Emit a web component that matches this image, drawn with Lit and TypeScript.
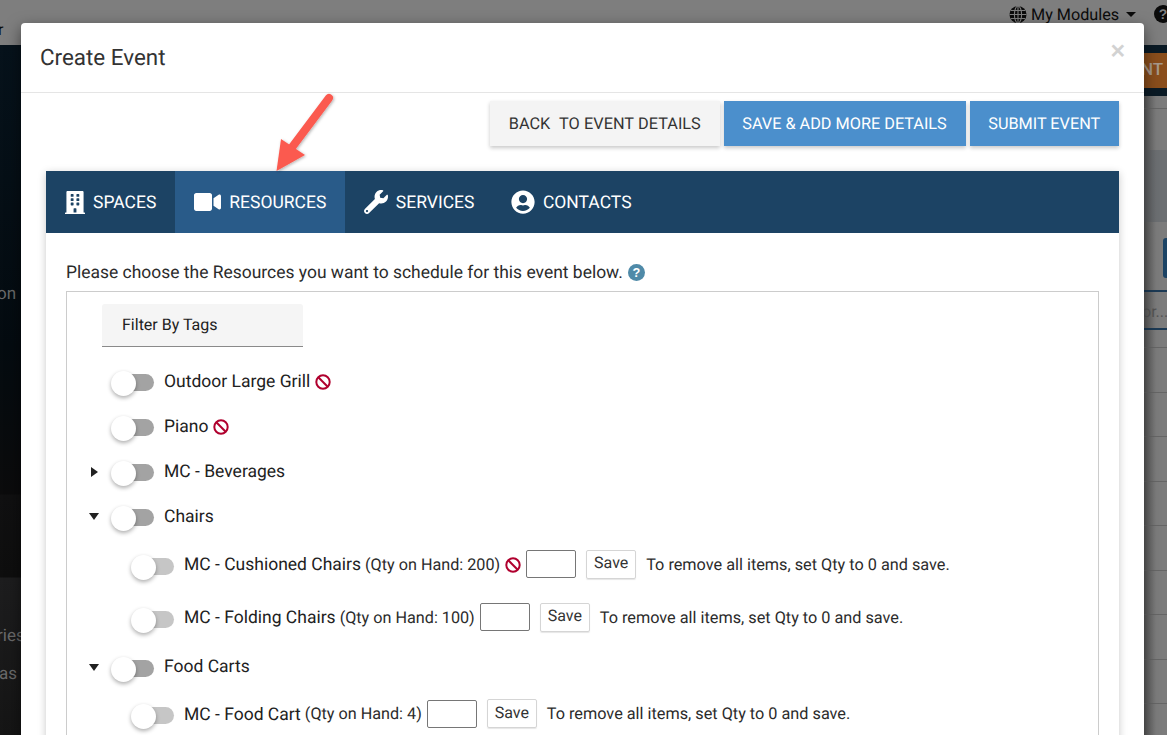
import { LitElement, html, css } from "lit";
import { customElement } from "lit/decorators.js";

const ban = html`<svg class="ban" viewBox="0 0 16 16"><circle cx="8" cy="8" r="6.700" fill="none" stroke="#b0002e" stroke-width="2"/><path d="M3.300 3.300 12.700 12.700" stroke="#b0002e" stroke-width="2"/></svg>`;

const building = html`<svg class="ico" style="width:20px;height:23px" viewBox="0 0 448 512" preserveAspectRatio="none"><path fill="#fff" d="M436 480h-20V24c0-13.255-10.745-24-24-24H56C42.745 0 32 10.745 32 24v456H12c-6.627 0-12 5.373-12 12v20h448v-20c0-6.627-5.373-12-12-12zM128 76c0-6.627 5.373-12 12-12h40c6.627 0 12 5.373 12 12v40c0 6.627-5.373 12-12 12h-40c-6.627 0-12-5.373-12-12V76zm0 96c0-6.627 5.373-12 12-12h40c6.627 0 12 5.373 12 12v40c0 6.627-5.373 12-12 12h-40c-6.627 0-12-5.373-12-12v-40zm52 148h-40c-6.627 0-12-5.373-12-12v-40c0-6.627 5.373-12 12-12h40c6.627 0 12 5.373 12 12v40c0 6.627-5.373 12-12 12zm76 160h-64v-84c0-6.627 5.373-12 12-12h40c6.627 0 12 5.373 12 12v84zm64-172c0 6.627-5.373 12-12 12h-40c-6.627 0-12-5.373-12-12v-40c0-6.627 5.373-12 12-12h40c6.627 0 12 5.373 12 12v40zm0-96c0 6.627-5.373 12-12 12h-40c-6.627 0-12-5.373-12-12v-40c0-6.627 5.373-12 12-12h40c6.627 0 12 5.373 12 12v40zm0-96c0 6.627-5.373 12-12 12h-40c-6.627 0-12-5.373-12-12V76c0-6.627 5.373-12 12-12h40c6.627 0 12 5.373 12 12v40z"/></svg>`;
const video = html`<svg class="ico" style="width:27px;height:24px" viewBox="0 0 576 512"><path fill="#fff" d="M336.200 64H47.800C21.400 64 0 85.400 0 111.800v288.400C0 426.600 21.400 448 47.800 448h288.400c26.400 0 47.800-21.400 47.800-47.800V111.800c0-26.400-21.400-47.800-47.800-47.800zm189.400 37.700L416 177.300v157.400l109.600 75.500c21.200 14.600 50.400-.3 50.400-25.800V127.500c0-25.400-29.100-40.400-50.400-25.800z"/></svg>`;
const wrench = html`<svg class="ico" style="width:24px;height:24px" viewBox="0 0 512 512"><path fill="#fff" d="M507.730 109.100c-2.240-9.030-13.540-12.090-20.120-5.510l-74.360 74.360-67.880-11.310-11.310-67.880 74.360-74.360c6.620-6.620 3.430-17.900-5.660-20.160-47.380-11.740-99.550.91-136.580 37.930-39.640 39.640-50.550 97.100-34.050 147.200L18.740 402.760c-24.990 24.990-24.990 65.510 0 90.500 24.990 24.990 65.510 24.990 90.500 0l213.210-213.210c50.120 16.710 107.470 5.680 147.370-34.220 37.070-37.070 49.700-89.320 37.910-136.730zM64 472c-13.250 0-24-10.750-24-24 0-13.260 10.750-24 24-24s24 10.740 24 24c0 13.250-10.750 24-24 24z"/></svg>`;
const user = html`<svg class="ico" style="width:24px;height:24px" viewBox="0 0 496 512"><path fill="#fff" d="M248 8C111 8 0 119 0 256s111 248 248 248 248-111 248-248S385 8 248 8zm0 96c48.600 0 88 39.400 88 88s-39.400 88-88 88-88-39.400-88-88 39.400-88 88-88zm0 344c-58.700 0-111.300-26.600-146.500-68.200 18.800-35.400 55.600-59.800 98.500-59.800 2.400 0 4.800.4 7.100 1.100 13 4.200 26.600 6.900 40.900 6.900 14.300 0 28-2.700 40.900-6.900 2.300-.7 4.700-1.100 7.100-1.100 42.900 0 79.700 24.400 98.500 59.800C359.300 421.400 306.700 448 248 448z"/></svg>`;

interface Row { label: string; qty?: string; ban?: boolean; caret?: "right" | "down"; child?: boolean }

const rows: Row[] = [
  { label: "Outdoor Large Grill", ban: true },
  { label: "Piano", ban: true },
  { label: "MC - Beverages", caret: "right" },
  { label: "Chairs", caret: "down" },
  { label: "MC - Cushioned Chairs", qty: "(Qty on Hand: 200)", ban: true, child: true },
  { label: "MC - Folding Chairs", qty: "(Qty on Hand: 100)", child: true },
  { label: "Food Carts", caret: "down" },
  { label: "MC - Food Cart", qty: "(Qty on Hand: 4)", child: true },
];

const gridLines = [302, 347, 391, 436, 480, 525, 569, 614, 658];

@customElement("app-root")
export class AppRoot extends LitElement {
  static styles = css`
    :host { display: block; position: relative; width: 1167px; height: 735px; overflow: hidden; background: #7f7f7f; font-family: Roboto, "Liberation Sans", sans-serif; color: #212121; text-rendering: geometricPrecision; }
    .bg { position: absolute; }
    .bg-top { left: 0; top: 0; width: 1167px; height: 45px; background: #7e7e7e; }
    .bg-left { left: 0; top: 45px; width: 21px; height: 690px; background: linear-gradient(180deg, #06121b 0, #040b10 300px, #0b0b0c 449px, #101011 450px, #0e0e0e 532px, #1d1d1e 533px, #151515 690px); overflow: hidden; }
    .bg-text { position: absolute; color: #6a6a6a; font-size: 17px; white-space: nowrap; line-height: 20px; }
    .bg-right { left: 1144px; top: 45px; width: 23px; height: 690px; background: linear-gradient(90deg, #5c5c5c 0, #7c7c7c 12px); overflow: hidden; }
    .band { position: absolute; left: 0; top: 0; width: 23px; height: 51px; background: #0a1a25; }
    .orange { position: absolute; left: 0; top: 8px; width: 23px; height: 35px; background: #8a4e1c; color: #a89a8c; font-size: 17px; font-weight: 500; line-height: 35px; text-indent: -3px; white-space: nowrap; overflow: hidden; }
    .strip { position: absolute; left: 0; top: 105px; width: 23px; height: 72px; background: linear-gradient(90deg, #5c5e60 0, #6c6f72 12px); }
    .rline { position: absolute; left: 0; width: 23px; height: 1px; background: #666; }
    .rline.navy { background: #1c3a55; height: 2px; }
    .tabstub { position: absolute; left: 19px; top: 193px; width: 4px; height: 40px; background: #1c4364; border-radius: 3px 0 0 3px; }
    .tb { position: absolute; left: 1009px; top: 5px; display: flex; align-items: center; gap: 4px; color: #0b0b0b; font-size: 16.200px; line-height: 19px; white-space: nowrap; }
    .caret-top { width: 0; height: 0; border-left: 5px solid transparent; border-right: 5px solid transparent; border-top: 5px solid #0b0b0b; margin-left: 3px; }
    .helptop { left: 1154px; top: 5px; }
    .tl { left: -2px; top: 20px; font-size: 16px; line-height: 19px; color: #0b0b0b; }

    .modal { position: absolute; left: 21px; top: 23px; width: 1123px; height: 760px; background: #fff; border-radius: 4px 4px 0 0; box-shadow: 0 5px 15px rgba(0,0,0,.5); display: flex; flex-direction: column; }
    .head { height: 70px; border-bottom: 1px solid #e5e5e5; display: flex; align-items: center; justify-content: space-between; padding: 0 19px 0 19px; box-sizing: border-box; flex: none; }
    h4 { margin: 2px 0 0; font-size: 22.400px; font-weight: 400; color: #333; line-height: 1; }
    .close { color: #d2d2d2; font-size: 25px; line-height: 25px; font-weight: 700; font-family: "Liberation Sans", sans-serif; margin-bottom: 13px; }
    .body { padding: 8px 25px 0; flex: 1; display: flex; flex-direction: column; }
    .actions { display: flex; justify-content: flex-end; gap: 4px; height: 45px; flex: none; }
    .btn { border: 0; padding: 0 18.750px; font: 400 16.250px Roboto, sans-serif; text-transform: uppercase; box-shadow: 0 2px 4px rgba(0,0,0,.22); color: #fff; background: #4b8fcc; display: flex; align-items: center; white-space: pre; }
    .btn.light { background: #f4f4f4; color: #333; font-size: 16.300px; word-spacing: .4px; }
    .panel { margin-top: 25px; flex: 1; box-shadow: 0 2px 8px rgba(0,0,0,.22); display: flex; flex-direction: column; }
    .tabs { display: flex; height: 62px; background: #1c4364; flex: none; color: #fff; }
    .tab { display: flex; align-items: center; font-size: 17.500px; padding: 0 18.500px; gap: 8px; }
    .tab span { padding-top: 1px; }
    .tab:nth-child(-n+2) { padding: 0 19px; }
    .tab:nth-child(3) { padding-right: 18px; }
    .tab.active { background: #295b89; }
    .ico { display: block; flex: none; }
    .content { padding: 29px 20px 0; flex: 1; }
    .intro { font-size: 17.470px; color: #2b2b2b; line-height: 20px; height: 20px; display: flex; align-items: center; gap: 5px; }
    .intro span { padding-top: 1px; }
    .help { width: 17px; height: 17px; }
    .box { margin-top: 9px; border: 1px solid #ccc; height: 500px; padding: 12px 35px; box-sizing: border-box; }
    .filter { width: 201px; height: 43px; box-sizing: border-box; background: #f5f5f5; border-bottom: 1px solid #8a8a8a; border-radius: 3px 3px 0 0; padding: 0 0 2px 20px; display: flex; align-items: center; font-size: 16px; color: #212121; }
    .list { margin-top: 12px; }
    .row { display: flex; align-items: center; height: 45px; font-size: 17.500px; white-space: nowrap; padding-left: 9px; }
    .row.parent { margin-bottom: -.500px; }
    .row.parent.food { margin-bottom: -1.500px; }
    .row.child { padding-left: 29px; height: 53px; }
    .caret { position: absolute; width: 0; height: 0; }
    .caret.right { border-top: 5px solid transparent; border-bottom: 5px solid transparent; border-left: 7px solid #212121; margin-left: -20px; }
    .caret.down { border-left: 5px solid transparent; border-right: 5px solid transparent; border-top: 7px solid #212121; margin-left: -22px; }
    .toggle { position: relative; width: 43px; height: 17px; margin: 2px 10px 0 0; flex: none; }
    .track { position: absolute; left: 9px; right: 0; top: 0; bottom: 0; background: #a3a3a3; border-radius: 0 9px 9px 0; }
    .child .track { background: #c6c6c6; }
    .thumb { position: absolute; left: 0; top: -3px; width: 25px; height: 25px; border-radius: 50%; background: #fff; box-shadow: 0 2px 4px rgba(0,0,0,.32); }
    .qty { font-size: 16.200px; margin: 0 0 2px 4px; color: #2b2b2b; }
    .ban { width: 16px; height: 16px; margin-left: 5px; flex: none; }
    .input { width: 50px; height: 28px; box-sizing: border-box; border: 1px solid #767676; border-radius: 2px; margin: 0 0 2px 5px; flex: none; }
    .save { width: 50px; height: 29px; box-sizing: border-box; border: 1px solid #d5d5d5; border-radius: 2px; margin: 0 0 2px 10px; padding-bottom: 3px; display: flex; align-items: center; justify-content: center; font-size: 16px; color: #333; box-shadow: 0 1px 1px rgba(0,0,0,.1); flex: none; }
    .note { font-size: 16.250px; margin: 0 0 2px 10px; color: #2b2b2b; }
    .arrow { position: absolute; left: 268px; top: 84px; width: 72px; height: 92px; overflow: visible; }
  `;

  renderRow(r: Row) {
    return html`<div class="row ${r.child ? "child" : ""} ${r.caret === "down" ? "parent" : ""} ${r.label === "Food Carts" ? "food" : ""}">
      ${r.caret ? html`<span class="caret ${r.caret}"></span>` : ""}
      <span class="toggle"><span class="track"></span><span class="thumb"></span></span>
      <span>${r.label}</span>
      ${r.qty ? html`<span class="qty">${r.qty}</span>` : ""}
      ${r.ban ? ban : ""}
      ${r.qty ? html`<span class="input"></span><span class="save">Save</span><span class="note">To remove all items, set Qty to 0 and save.</span>` : ""}
    </div>`;
  }

  render() {
    return html`
      <div class="bg bg-top"></div>
      <div class="tb">
        <svg width="18" height="19" viewBox="0 0 20 20"><circle cx="10" cy="10" r="9.500" fill="#0b0b0b"/><g fill="none" stroke="#7e7e7e" stroke-width="1.200"><ellipse cx="10" cy="10" rx="4" ry="9.500"/><path d="M10 .5v19M.5 10h19M2 5.500h16M2 14.500h16"/></g></svg>
        <span>My Modules</span><span class="caret-top"></span>
      </div>
      <svg class="bg helptop" width="18" height="18" viewBox="0 0 18 18"><circle cx="9" cy="9" r="9" fill="#0b0b0b"/><text x="9" y="14" font-size="14" font-weight="700" text-anchor="middle" fill="#7e7e7e" font-family="Liberation Sans">?</text></svg>
      <div class="bg tl">r</div>
      <div class="bg bg-left">
        <div class="bg-text" style="left:-3px;top:239px">on</div>
        <div class="bg-text" style="left:-3px;top:581px">ries</div>
        <div class="bg-text" style="left:-1px;top:619px">as</div>
      </div>
      <div class="bg bg-right">
        <div class="band"></div>
        <div class="orange">NT</div>
        <div class="strip"></div>
        <div class="rline" style="top:63px"></div>
        <div class="tabstub"></div>
        <div class="rline navy" style="top:245px"></div>
        <div class="rline navy" style="top:283px"></div>
        ${gridLines.map((y) => html`<div class="rline" style="top:${y}px"></div>`)}
        <div class="bg-text" style="left:-2px;top:257px;color:#555;font-size:16px">or...</div>
      </div>

      <div class="modal">
        <div class="head"><h4>Create Event</h4><span class="close">×</span></div>
        <div class="body">
          <div class="actions">
            <div class="btn light">Back  to Event Details</div>
            <div class="btn">Save &amp; Add More Details</div>
            <div class="btn">Submit Event</div>
          </div>
          <div class="panel">
            <div class="tabs">
              <div class="tab">${building}<span>SPACES</span></div>
              <div class="tab active">${video}<span>RESOURCES</span></div>
              <div class="tab">${wrench}<span>SERVICES</span></div>
              <div class="tab">${user}<span>CONTACTS</span></div>
            </div>
            <div class="content">
              <div class="intro"><span>Please choose the Resources you want to schedule for this event below.</span>
                <svg class="help" viewBox="0 0 16 16"><circle cx="8" cy="8" r="8" fill="#4f8aa8"/><text x="8" y="12.500" font-size="12" font-weight="700" text-anchor="middle" fill="#fff" font-family="Liberation Sans">?</text></svg>
              </div>
              <div class="box">
                <div class="filter">Filter By Tags</div>
                <div class="list">${rows.map((r) => this.renderRow(r))}</div>
              </div>
            </div>
          </div>
        </div>
      </div>

      <svg class="arrow" viewBox="0 0 72 92">
        <defs><filter id="s" x="-30%" y="-30%" width="160%" height="160%"><feDropShadow dx="1" dy="1" stdDeviation="1.500" flood-color="#000" flood-opacity=".3"/></filter></defs>
        <g filter="url(#s)">
          <path d="M61 14 22 66" stroke="#fb5a50" stroke-width="8" stroke-linecap="round" fill="none"/>
          <path d="M13 55 8.500 87 37 71z" fill="#fb5a50"/>
        </g>
      </svg>
    `;
  }
}
